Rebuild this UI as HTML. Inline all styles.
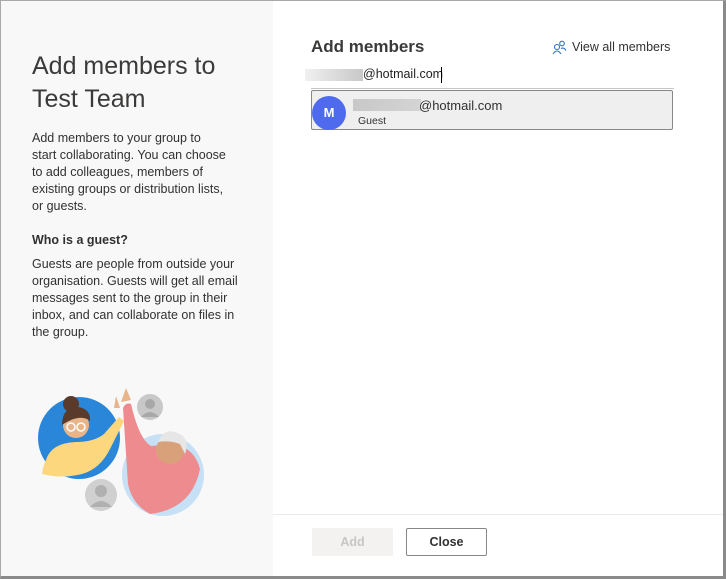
<!DOCTYPE html>
<html><head><meta charset="utf-8"><style>
*{margin:0;padding:0;box-sizing:border-box}
body{width:726px;height:579px;overflow:hidden;background:#fff;font-family:"Liberation Sans",sans-serif;position:relative;color:#323130}
.frame{position:absolute;left:0;top:0;width:726px;height:579px;border:1px solid #a8a8a8;border-right:3px solid #8a8a8a;border-bottom:3px solid #8a8a8a}
.left{position:absolute;left:1px;top:1px;width:272px;height:575px;background:#f8f8f8}
.a{position:absolute;white-space:nowrap}
.p{font-size:12.5px;line-height:17px;color:#323130}
</style></head><body>
<div class="left"></div>
<div class="a" style="left:32px;top:50px;font-size:25px;line-height:33px;color:#3b3a39">Add members to<br>Test Team</div>
<div class="a p" style="left:32px;top:130px">Add members to your group to<br>start collaborating. You can choose<br>to add colleagues, members of<br>existing groups or distribution lists,<br>or guests.</div>
<div class="a" style="left:32px;top:233px;font-size:12.5px;font-weight:bold;color:#323130">Who is a guest?</div>
<div class="a p" style="left:32px;top:256px">Guests are people from outside your<br>organisation. Guests will get all email<br>messages sent to the group in their<br>inbox, and can collaborate on files in<br>the group.</div>
<svg class="a" style="left:20px;top:380px" width="200" height="150" viewBox="0 0 200 150">
<circle cx="130" cy="27" r="13" fill="#c8c8c8"/><circle cx="130" cy="24" r="5" fill="#a8a8a8"/><path d="M121 37 q9-10 18 0" fill="#a8a8a8"/>
<circle cx="81" cy="115" r="16" fill="#d0d0d0"/><circle cx="81" cy="111" r="6" fill="#b0b0b0"/><path d="M70 127 q11-12 22 0" fill="#b0b0b0"/>
<circle cx="59" cy="58" r="41" fill="#2a86d8"/>
<path d="M26 80 q5-17 30-18 q18 0 28-8 l15-17 l5 4 l-14 28 q-10 20-28 25 q-20 5-40 0 q1-8 4-14z" fill="#fdd77e"/>
<circle cx="56" cy="45" r="13" fill="#e8b48a"/><path d="M42 45 q0-18 16-18 q13 2 12 14 q-10-8-28 4z" fill="#5a3a2a"/><circle cx="51" cy="24" r="8" fill="#5a3a2a"/>
<circle cx="51" cy="47" r="4" fill="none" stroke="#fff" stroke-width="1.5"/><circle cx="61" cy="47" r="4" fill="none" stroke="#fff" stroke-width="1.5"/>
<path d="M94 28 l2-12 l4 12z" fill="#e8b48a"/>
<circle cx="143" cy="95" r="41" fill="#c6e0f5"/>
<path d="M103 28 q3-6 8-4 q8 35 20 42 l24-2 q20 5 25 25 q-8 40-50 45 q-18-10-22-30z" fill="#ee8b8e"/>
<path d="M101 22 l5-14 l5 12z" fill="#e8b48a"/>
<circle cx="150" cy="70" r="14" fill="#d9a17a"/><path d="M138 62 q6-16 22-8 q10 6 5 20 l-5-10 q-10-4-22-2z" fill="#e6e6e6"/>
</svg>
<div class="a" style="left:311px;top:37px;font-size:17px;font-weight:bold;color:#3b3a39">Add members</div>
<svg class="a" style="left:552px;top:40px" width="15" height="15" viewBox="0 0 15 15" fill="none" stroke="#2f6fcf" stroke-width="1.1"><circle cx="5" cy="7" r="2.5"/><path d="M1 14 q4-6 8 0"/><circle cx="10" cy="3.5" r="2.3"/><path d="M9 8.5 q3-1.5 5 2"/></svg>
<div class="a" style="left:572px;top:40px;font-size:12.5px;color:#323130">View all members</div>
<div class="a" style="left:305px;top:69px;width:58px;height:12px;background:linear-gradient(90deg,#f0f0f0,#c8c8c8)"></div>
<div class="a" style="left:363px;top:67px;font-size:12.5px;color:#201f1e">@hotmail.com</div>
<div class="a" style="left:441px;top:67px;width:1px;height:16px;background:#000"></div>
<div class="a" style="left:311px;top:88px;width:363px;height:1px;background:#c8c6c4"></div>
<div class="a" style="left:311px;top:90px;width:362px;height:40px;background:#efefef;border:1px solid #8a8886;border-radius:2px"></div>
<div class="a" style="left:312px;top:96px;width:34px;height:34px;border-radius:50%;background:#4f6bed;color:#fff;font-weight:bold;font-size:13px;text-align:center;line-height:34px">M</div>
<div class="a" style="left:353px;top:99px;width:68px;height:12px;background:linear-gradient(90deg,#c8c8c8,#d4d4d4)"></div>
<div class="a" style="left:419px;top:98px;font-size:13px;color:#323130">@hotmail.com</div>
<div class="a" style="left:358px;top:115px;font-size:10.5px;color:#323130">Guest</div>
<div class="a" style="left:273px;top:514px;width:450px;height:1px;background:#ebebeb"></div>
<div class="a" style="left:312px;top:528px;width:81px;height:28px;background:#f3f2f1;border-radius:2px;color:#c8c6c4;font-size:12.5px;font-weight:bold;text-align:center;line-height:28px">Add</div>
<div class="a" style="left:406px;top:528px;width:81px;height:28px;background:#fff;border:1px solid #8a8886;border-radius:2px;color:#323130;font-size:12.5px;font-weight:bold;text-align:center;line-height:26px">Close</div>
<div class="frame"></div>
</body></html>
